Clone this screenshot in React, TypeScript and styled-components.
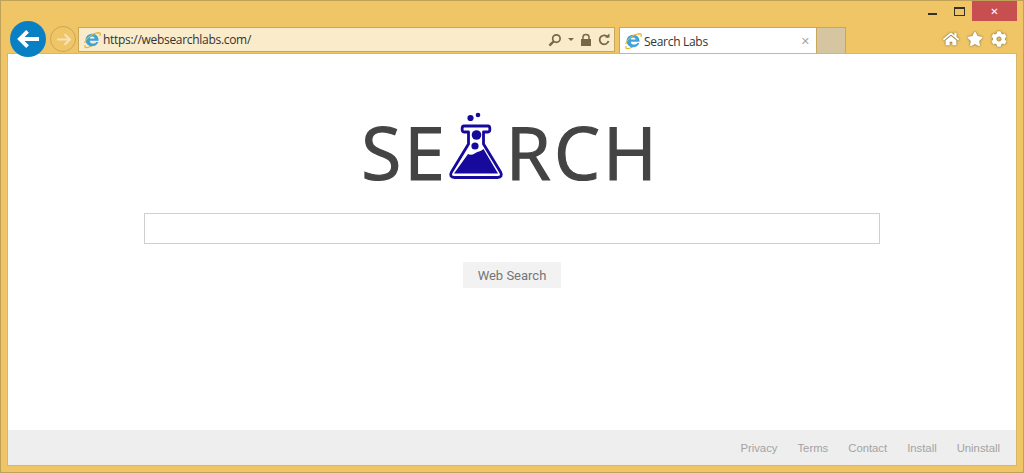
import React from 'react';
import styled, { createGlobalStyle } from 'styled-components';
import { FaHome, FaStar, FaCog } from 'react-icons/fa';

const GlobalStyle = createGlobalStyle`
  html, body {
    margin: 0;
    padding: 0;
    background: #efc565;
  }
`;

const IeIcon = ({ size }: { size: number }) => (
  <svg width={size} height={size} viewBox="0 0 24 24">
    <path d="M3 19C1 23 6 23 11 20" fill="none" stroke="#e8b52c" strokeWidth="1.8" />
    <path d="M19 3.5C22 1 24 2.5 22.5 6.5" fill="none" stroke="#e8b52c" strokeWidth="1.8" />
    <path
      d="M12.5 3.5C17.5 3.5 21 7.5 20.8 13H9C9.3 17.5 15 18 18 14.6H20.5C18.5 20.5 10.5 22.5 6 18C2.5 14.5 3 10 5 7C6.5 5 9 3.5 12.5 3.5Z"
      fill="#3ea2dc"
    />
    <path d="M9 10C9.3 6.3 15.3 6.3 15.7 10Z" fill="#f6fbfe" />
    <path d="M2 16C4 10 11 4 20 2" fill="none" stroke="#e8b52c" strokeWidth="1.4" />
  </svg>
);

const Flask = () => (
  <FlaskSvg width="56" height="68" viewBox="0 0 56 68">
    <circle cx="22.5" cy="6" r="3.1" fill="#16099b" />
    <circle cx="30" cy="3" r="2.3" fill="#16099b" />
    <path
      d="M16 14H40C42.5 14 42.5 20 40 20H35.500V32L52.500 60C54.500 63.500 53 65.500 49.500 65.500H6.500C3 65.500 1.500 63.500 3.500 60L20.500 32V20H16C13.500 20 13.500 14 16 14Z"
      fill="#fff"
      stroke="#16099b"
      strokeWidth="2.8"
      strokeLinejoin="round"
    />
    <path
      d="M20 42C24 44.500 27 40.500 31 39.500C33 39 35 37.500 35.500 37L50 61.500H6Z"
      fill="#16099b"
    />
    <circle cx="28.500" cy="23" r="4.800" fill="#16099b" />
    <circle cx="27" cy="34" r="3.600" fill="#16099b" />
  </FlaskSvg>
);

const App = () => {
  return (
    <Frame>
      <GlobalStyle />
      <TitleBar>
        <MinimizeGlyph />
        <MaximizeGlyph />
        <CloseButton>✕</CloseButton>
      </TitleBar>

      <Toolbar>
        <BackButton>
          <svg width="23" height="20" viewBox="0 0 24 20">
            <path d="M11 2L3 10L11 18M3 10H23" fill="none" stroke="#fff" strokeWidth="4" />
          </svg>
        </BackButton>
        <ForwardButton>
          <svg width="15" height="13" viewBox="0 0 14 12">
            <path d="M8 1L13 6L8 11M13 6H1" fill="none" stroke="#f3e3bb" strokeWidth="2" />
          </svg>
        </ForwardButton>

        <AddressBar>
          <IeIcon size={18} />
          <AddressText>https://websearchlabs.com/</AddressText>
          <AddressTools>
            <svg width="14" height="14" viewBox="0 0 15 15">
              <circle cx="9" cy="6" r="4" fill="none" stroke="#75694a" strokeWidth="1.800" />
              <path d="M6 9L1.500 13.500" stroke="#75694a" strokeWidth="2.400" />
            </svg>
            <Caret />
            <svg width="12" height="13" viewBox="0 0 12 13">
              <path d="M3 6V4C3 0.500 9 0.500 9 4V6" fill="none" stroke="#75694a" strokeWidth="1.500" />
              <rect x="1" y="6" width="10" height="7" fill="#75694a" />
            </svg>
            <svg width="12" height="13" viewBox="0 0 12 13">
              <path d="M10 4.500A4.500 4.500 0 1 0 10.500 8" fill="none" stroke="#75694a" strokeWidth="1.800" />
              <path d="M7 4.500H11.500V0.500Z" fill="#75694a" />
            </svg>
          </AddressTools>
        </AddressBar>

        <Tab>
          <IeIcon size={18} />
          <TabTitle>Search Labs</TabTitle>
          <TabClose>✕</TabClose>
        </Tab>
        <NewTab />

        <ToolIcons>
          <FaHome size={16} />
          <FaStar size={16} />
          <FaCog size={16} />
        </ToolIcons>
      </Toolbar>

      <Page>
        <Main>
          <Logo>
            <LogoWord>SE</LogoWord>
            <FlaskSlot>
              <Flask />
            </FlaskSlot>
            <LogoWord>RCH</LogoWord>
          </Logo>
          <SearchInput />
          <SearchButton>Web Search</SearchButton>
        </Main>
        <Footer>
          <FooterLink>Privacy</FooterLink>
          <FooterLink>Terms</FooterLink>
          <FooterLink>Contact</FooterLink>
          <FooterLink>Install</FooterLink>
          <FooterLink>Uninstall</FooterLink>
        </Footer>
      </Page>
    </Frame>
  );
};

export default App;

const Frame = styled.div`
  box-sizing: border-box;
  width: 1024px;
  height: 473px;
  padding: 0 7px 7px;
  display: flex;
  flex-direction: column;
  overflow: hidden;
  background: #efc565;
  border: 1px solid #bfa15a;
  font-family: 'Open Sans', sans-serif;
`;

const TitleBar = styled.div`
  height: 20px;
  display: flex;
  justify-content: flex-end;
  align-items: flex-start;
  margin-right: -1px;
`;

const MinimizeGlyph = styled.div`
  width: 9px;
  height: 2px;
  margin-top: 12px;
  background: #33302a;
`;

const MaximizeGlyph = styled.div`
  box-sizing: border-box;
  width: 11px;
  height: 9px;
  margin: 6px 7px 0 17px;
  border: 1px solid #33302a;
  border-top-width: 2px;
`;

const CloseButton = styled.div`
  width: 45px;
  height: 20px;
  display: flex;
  align-items: center;
  justify-content: center;
  background: #c84f50;
  color: #fff;
  font: bold 10px 'DejaVu Sans', sans-serif;
`;

const Toolbar = styled.div`
  height: 33px;
  display: flex;
  align-items: flex-start;
  margin-left: 2px;
`;

const BackButton = styled.div`
  position: relative;
  z-index: 2;
  flex: none;
  width: 36px;
  height: 36px;
  display: flex;
  align-items: center;
  justify-content: center;
  border-radius: 50%;
  background: #0a80c4;
`;

const ForwardButton = styled.div`
  flex: none;
  box-sizing: border-box;
  width: 26px;
  height: 26px;
  margin: 5px 0 0 4px;
  display: flex;
  align-items: center;
  justify-content: center;
  border-radius: 50%;
  border: 1px solid #c9a75a;
`;

const AddressBar = styled.div`
  box-sizing: border-box;
  flex: none;
  width: 537px;
  height: 25px;
  margin: 6px 0 0 2px;
  padding: 0 4px;
  display: flex;
  align-items: center;
  background: #faebca;
  border: 1px solid #c9a75a;
`;

const AddressText = styled.span`
  flex: 1;
  margin-left: 2px;
  font-size: 12px;
  letter-spacing: -0.3px;
  color: #333;
`;

const AddressTools = styled.div`
  display: flex;
  align-items: center;
  gap: 6px;
`;

const Caret = styled.div`
  width: 0;
  height: 0;
  border: 3.500px solid transparent;
  border-top: 3.500px solid #75694a;
  border-bottom: 0;
`;

const Tab = styled.div`
  box-sizing: border-box;
  flex: none;
  width: 198px;
  height: 27px;
  margin: 6px 0 0 4px;
  padding: 0 4px;
  display: flex;
  align-items: center;
  background: #fff;
  border: 1px solid #c9a75a;
  border-bottom: 0;
`;

const TabTitle = styled.span`
  flex: 1;
  margin-left: 2px;
  font-size: 12px;
  letter-spacing: -0.3px;
  color: #333;
`;

const TabClose = styled.span`
  margin-right: 2px;
  font: bold 11px 'DejaVu Sans', sans-serif;
  color: #a8a8a8;
`;

const NewTab = styled.div`
  box-sizing: border-box;
  flex: none;
  width: 29px;
  height: 27px;
  margin-top: 6px;
  background: #d5c5a0;
  border: 1px solid #c9a75a;
  border-left: 0;
  border-bottom: 0;
`;

const ToolIcons = styled.div`
  flex: none;
  margin: 10px 0 0 97px;
  display: flex;
  gap: 8px;
  color: #fff;
  filter: drop-shadow(0 0 1px #6f5f36);
`;

const Page = styled.div`
  position: relative;
  z-index: 1;
  flex: 1;
  display: flex;
  flex-direction: column;
  background: #fff;
  box-shadow: 0 0 0 1px #d8b868;
`;

const Main = styled.div`
  flex: 1;
  display: flex;
  flex-direction: column;
  align-items: center;
`;

const Logo = styled.div`
  height: 128px;
  margin-right: 3px;
  display: flex;
  align-items: flex-start;
`;

const LogoWord = styled.span`
  margin-top: 48px;
  font-size: 73px;
  font-weight: 400;
  line-height: 100px;
  letter-spacing: 3px;
  color: #444;
  -webkit-text-stroke: 1.2px #444;
`;

const FlaskSlot = styled.div`
  flex: none;
  width: 58px;
  margin-top: 58px;
  display: flex;
  justify-content: flex-start;
`;

const FlaskSvg = styled.svg`
  flex: none;
`;

const SearchInput = styled.div`
  box-sizing: border-box;
  flex: none;
  width: 736px;
  height: 31px;
  margin-top: 31px;
  border: 1px solid #cfcfcf;
  background: #fff;
`;

const SearchButton = styled.div`
  flex: none;
  width: 98px;
  height: 26px;
  margin-top: 18px;
  display: flex;
  align-items: center;
  justify-content: center;
  background: #f2f2f2;
  color: #757575;
  font: 13px Roboto, sans-serif;
`;

const Footer = styled.div`
  flex: none;
  height: 35px;
  padding-right: 16px;
  display: flex;
  align-items: center;
  justify-content: flex-end;
  gap: 20px;
  background: #eeeeee;
`;

const FooterLink = styled.span`
  font: 11.300px 'Liberation Sans', sans-serif;
  color: #a3a3a3;
`;
